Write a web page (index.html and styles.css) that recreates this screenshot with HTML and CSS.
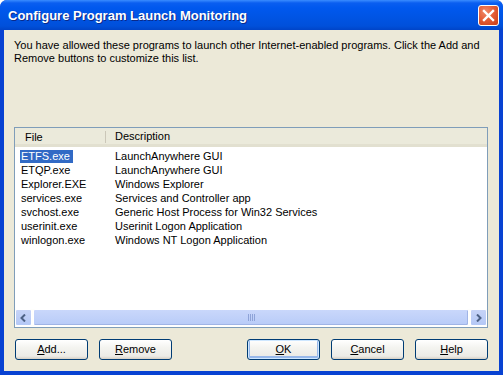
FILE: index.html
```html
<!DOCTYPE html>
<html>
<head>
<meta charset="utf-8">
<link rel="stylesheet" href="styles.css">
</head>
<body>
<div class="window">
  <div class="titlebar">
    <span class="title">Configure Program Launch Monitoring</span>
    <span class="close">
      <svg width="13" height="13" viewBox="0 0 13 13"><path d="M2 2 L11 11 M11 2 L2 11" stroke="#fff" stroke-width="2.4" stroke-linecap="square"/></svg>
    </span>
  </div>
  <div class="client">
    <p class="intro">You have allowed these programs to launch other Internet-enabled programs. Click the Add and Remove buttons to customize this list.</p>
    <div class="listbox">
      <div class="header">
        <div class="hcell col1">File</div>
        <div class="hcell col2">Description</div>
        <div class="hcell rest"></div>
      </div>
      <div class="rows">
        <div class="row"><span class="c1"><span class="sel">ETFS.exe</span></span><span class="c2">LaunchAnywhere GUI</span></div>
        <div class="row"><span class="c1">ETQP.exe</span><span class="c2">LaunchAnywhere GUI</span></div>
        <div class="row"><span class="c1">Explorer.EXE</span><span class="c2">Windows Explorer</span></div>
        <div class="row"><span class="c1">services.exe</span><span class="c2">Services and Controller app</span></div>
        <div class="row"><span class="c1">svchost.exe</span><span class="c2">Generic Host Process for Win32 Services</span></div>
        <div class="row"><span class="c1">userinit.exe</span><span class="c2">Userinit Logon Application</span></div>
        <div class="row"><span class="c1">winlogon.exe</span><span class="c2">Windows NT Logon Application</span></div>
      </div>
      <div class="hscroll">
        <div class="sbtn"><svg width="7" height="8" viewBox="0 0 7 8"><path d="M5 0.5 L1.5 4 L5 7.5" fill="none" stroke="#4d6185" stroke-width="2"/></svg></div>
        <div class="thumb"><span class="grip"></span></div>
        <div class="sbtn"><svg width="7" height="8" viewBox="0 0 7 8"><path d="M2 0.5 L5.5 4 L2 7.5" fill="none" stroke="#4d6185" stroke-width="2"/></svg></div>
      </div>
    </div>
    <div class="buttons">
      <div class="group">
        <button class="btn"><u>A</u>dd...</button>
        <button class="btn"><u>R</u>emove</button>
      </div>
      <div class="group">
        <button class="btn def"><u>O</u>K</button>
        <button class="btn"><u>C</u>ancel</button>
        <button class="btn"><u>H</u>elp</button>
      </div>
    </div>
  </div>
</div>
</body>
</html>
```

FILE: styles.css
```css
html, body {
  margin: 0;
  padding: 0;
  width: 503px;
  height: 375px;
  overflow: hidden;
  background: #ffffff;
}
.window {
  width: 503px;
  height: 375px;
  box-sizing: border-box;
  display: flex;
  flex-direction: column;
  background: #0842d2;
  border-radius: 7px 7px 0 0;
  padding: 0 4px 4px 4px;
  font-family: "Liberation Sans", Arial, sans-serif;
  font-size: 11px;
  color: #000;
}
.titlebar {
  height: 30px;
  margin: 0 -4px;
  padding: 0 4px 0 8px;
  display: flex;
  align-items: center;
  justify-content: space-between;
  border-radius: 7px 7px 0 0;
  background: linear-gradient(to bottom, #3a8cff 0px, #0a5ef0 3px, #0058ee 8px, #0054e3 18px, #0050da 26px, #0044c8 30px);
}
.title {
  color: #fff;
  font-family: "Liberation Sans", Arial, sans-serif;
  font-weight: bold;
  font-size: 13px;
  text-shadow: 1px 1px 0 #0a2a8a;
  margin-top: 1px;
}
.close {
  width: 19px;
  height: 19px;
  border: 1px solid #fff;
  border-radius: 3px;
  background: radial-gradient(circle at 35% 30%, #f08a6a 0%, #e45e38 45%, #c93d14 100%);
  display: flex;
  align-items: center;
  justify-content: center;
  margin-top: 1px;
}
.client {
  flex: 1;
  background: #ece9d8;
  display: flex;
  flex-direction: column;
  padding: 9px 11px 0 10px;
}
.intro {
  margin: 0;
  line-height: 13px;
  height: 88px;
}
.listbox {
  height: 201px;
  box-sizing: border-box;
  border: 1px solid #7f9db9;
  background: #fff;
  display: flex;
  flex-direction: column;
}
.header {
  display: flex;
  height: 19px;
  box-sizing: border-box;
  background: #ebeadb;
  border-bottom: 3px solid #e2e0d0;
}
.hcell {
  line-height: 17px;
  box-sizing: border-box;
}
.col1 {
  width: 91px;
  padding-left: 10px;
  border-right: 1px solid #cbc7b8;
  margin-top: 3px;
  line-height: 12px;
  height: 12px;
  margin-bottom: 1px;
}
.col2 { width: 200px; padding-left: 9px; }
.rest { flex: 1; }
.rows {
  flex: 1;
  padding-top: 2px;
}
.row {
  height: 14px;
  line-height: 14px;
  display: flex;
  white-space: nowrap;
}
.c1 {
  width: 100px;
  padding-left: 6px;
  box-sizing: border-box;
}
.c2 { padding-left: 0; }
.sel {
  display: inline-block;
  background: #316ac5;
  color: #fff;
  padding: 0 3px 0 1px;
  margin-left: -1px;
  line-height: 13px;
}
.hscroll {
  height: 17px;
  display: flex;
  background: #fefefb;
  margin-bottom: 1px;
}
.sbtn {
  width: 17px;
  height: 17px;
  box-sizing: border-box;
  border: 1px solid #fff;
  border-radius: 2px;
  background: linear-gradient(to bottom, #c6d3f7, #b4c8f6);
  display: flex;
  align-items: center;
  justify-content: center;
}
.thumb {
  flex: 1;
  margin: 0 1px;
  box-sizing: border-box;
  border: 1px solid #fff;
  border-radius: 2px;
  background: linear-gradient(to bottom, #c9d7fb, #b8cbf8);
  display: flex;
  align-items: center;
  justify-content: center;
  box-shadow: inset -1px -1px 0 #a0b4e6;
}
.grip {
  width: 7px;
  height: 7px;
  background: repeating-linear-gradient(to right, #8ea3d8 0 1px, transparent 1px 2px);
}
.buttons {
  display: flex;
  justify-content: space-between;
  margin-top: 11px;
  padding-left: 1px;
}
.group {
  display: flex;
  gap: 11px;
}
.btn {
  width: 73px;
  height: 21px;
  box-sizing: border-box;
  border: 1px solid #003c74;
  border-radius: 3px;
  background: linear-gradient(to bottom, #ffffff 0%, #f4f4f0 40%, #ecebe6 85%, #d6d0c5 100%);
  font-family: "Liberation Sans", Arial, sans-serif;
  font-size: 11px;
  color: #000;
  padding: 0;
  line-height: 19px;
}
.btn.def {
  box-shadow: inset 0 0 0 1px #cee7ff, inset 0 -1px 0 2px #98b8ea;
}
.btn u { text-decoration: underline; text-underline-offset: 1px; }
```
